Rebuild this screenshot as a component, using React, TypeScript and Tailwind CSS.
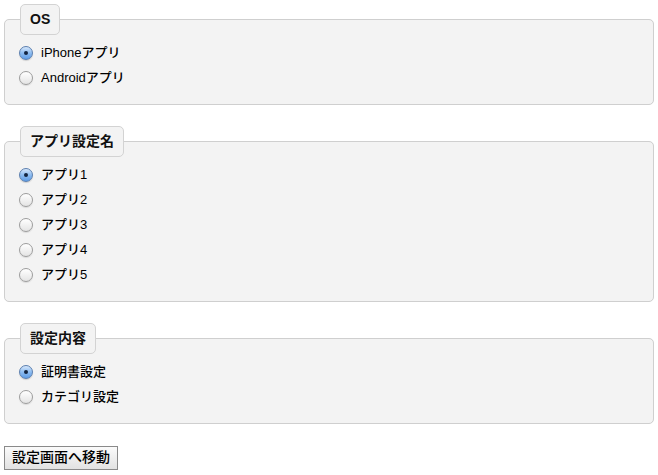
import React from "react";

const FONT = '"Liberation Sans", "Noto Sans CJK JP", sans-serif';

function Radio({ checked }: { checked: boolean }) {
  if (checked) {
    return (
      <span className="relative ml-[-1px] flex h-[14px] w-[14px] shrink-0 items-center justify-center rounded-full border border-[#5b7faf] bg-gradient-to-b from-[#d6e7fb] via-[#8dbcf0] to-[#5f9de6] shadow-[0_1px_1px_rgba(0,0,0,0.15)]">
        <span className="h-[4px] w-[4px] rounded-full bg-[#13243f]" />
      </span>
    );
  }
  return (
    <span className="ml-[-1px] flex h-[14px] w-[14px] shrink-0 rounded-full border border-[#9d9d9d] bg-gradient-to-b from-[#ffffff] to-[#e4e4e4] shadow-[0_1px_1px_rgba(0,0,0,0.1)]" />
  );
}

function Group({
  legend,
  items,
  selected,
}: {
  legend: string;
  items: string[];
  selected: number;
}) {
  return (
    <fieldset className="m-0 rounded-[5px] border border-[#cfcfcf] bg-[#f3f3f3] px-[15px] pt-[5px] pb-[14px]">
      <legend className="rounded-[5px] border border-[#d3d3d3] bg-[#f3f3f3] px-[9px] py-[6px] text-[14px] leading-[17px] font-semibold text-[#111]">
        {legend}
      </legend>
      <div className="flex flex-col">
        {items.map((it, i) => (
          <label key={it} className="flex h-[25px] items-center gap-[8px] text-[13px] font-medium text-black">
            <Radio checked={i === selected} />
            <span className="leading-[16px]">{it}</span>
          </label>
        ))}
      </div>
    </fieldset>
  );
}

export default function App() {
  return (
    <div className="min-h-[475px] w-[658px] bg-white px-[4px] pt-[4px]" style={{ fontFamily: FONT }}>
      <div className="flex flex-col gap-[21px]">
        <Group legend="OS" items={["iPhoneアプリ", "Androidアプリ"]} selected={0} />
        <Group legend="アプリ設定名" items={["アプリ1", "アプリ2", "アプリ3", "アプリ4", "アプリ5"]} selected={0} />
        <Group legend="設定内容" items={["証明書設定", "カテゴリ設定"]} selected={0} />
        <div>
          <button className="h-[24px] border border-[#8a8a8a] bg-gradient-to-b from-[#fbfbfb] to-[#e2e2e2] px-[7px] text-[14px] leading-[17px] font-medium text-black">
            設定画面へ移動
          </button>
        </div>
      </div>
    </div>
  );
}
